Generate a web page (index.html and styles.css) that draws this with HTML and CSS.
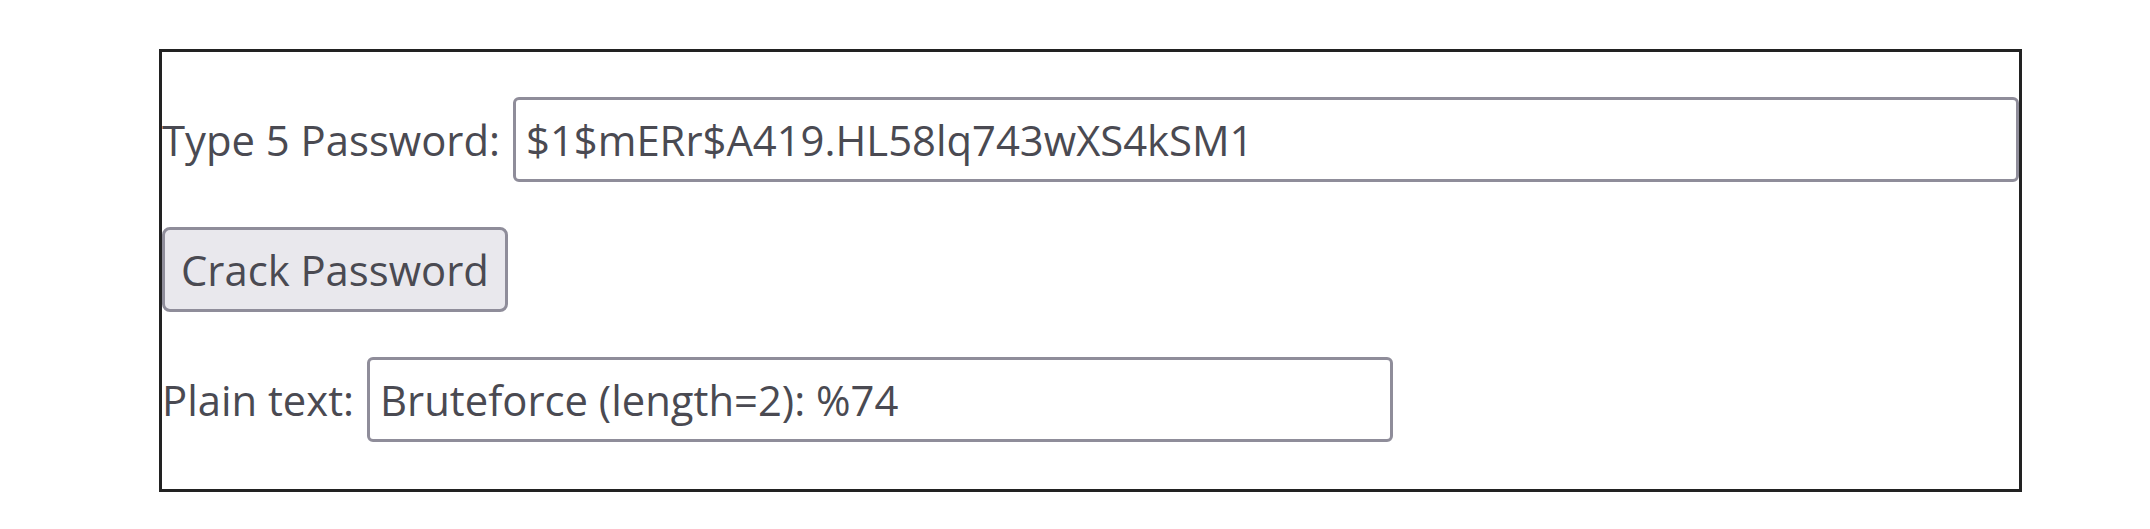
FILE: index.html
```html
<!DOCTYPE html>
<html>
<head>
<meta charset="utf-8">
<link rel="stylesheet" href="styles.css">
</head>
<body>
<div class="panel">
  <div class="row">
    <label class="label" for="hash">Type 5 Password:</label>
    <input class="field field-wide" id="hash" type="text" value="$1$mERr$A419.HL58lq743wXS4kSM1">
  </div>
  <div class="row">
    <button class="btn" type="button">Crack Password</button>
  </div>
  <div class="row">
    <label class="label" for="plain">Plain text:</label>
    <input class="field field-plain" id="plain" type="text" value="Bruteforce (length=2): %74">
  </div>
</div>
</body>
</html>
```

FILE: styles.css
```css
html, body {
  margin: 0;
  padding: 0;
  background: #ffffff;
}

body {
  padding: 49px 0 0 159px;
  font-family: "Open Sans", "Noto Sans", sans-serif;
  font-size: 41.8px;
  color: #4a4a52;
}

.panel {
  box-sizing: border-box;
  width: 1863px;
  height: 443px;
  border: 3px solid #222222;
  padding: 45px 0 0 0;
  display: flex;
  flex-direction: column;
  gap: 45px;
}

.row {
  display: flex;
  align-items: center;
  height: 85px;
}

.label {
  white-space: nowrap;
  margin-right: 13px;
}

.field {
  box-sizing: border-box;
  height: 85px;
  border: 3px solid #8f8d9a;
  border-radius: 6px;
  padding: 0 10px;
  font-family: "Open Sans", "Noto Sans", sans-serif;
  font-size: 41.8px;
  color: #4a4a52;
  background: #ffffff;
  outline: none;
}

.field-wide {
  flex: 1;
  min-width: 0;
}

.field-plain {
  width: 1026px;
}

.btn {
  box-sizing: border-box;
  height: 85px;
  padding: 0 16px;
  border: 3px solid #8f8d9a;
  border-radius: 8px;
  background: #e9e8ed;
  font-family: "Open Sans", "Noto Sans", sans-serif;
  font-size: 41.8px;
  color: #4a4a52;
}
```
